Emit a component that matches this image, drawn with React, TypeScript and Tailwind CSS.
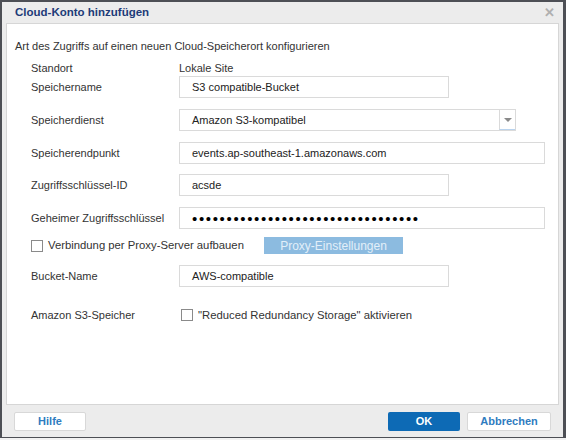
import React from 'react'

const font = { fontFamily: '"Liberation Sans", Arial, sans-serif' }

function Field({ label, children }: { label: string; children: React.ReactNode }) {
    return (
        <div className="flex items-center h-[22px]">
            <div className="w-[148px] text-[11px] text-[#333]">{label}</div>
            {children}
        </div>
    )
}

function TextBox({ value, w }: { value: string; w: string }) {
    return (
        <div className={`${w} h-[22px] border border-[#dadada] bg-white flex items-center px-[12px] text-[11px] text-[#222]`}>
            {value}
        </div>
    )
}

function Checkbox() {
    return <div className="w-[12px] h-[12px] border border-[#8a8a8a] bg-white shrink-0" />
}

export default function App() {
    return (
        <div className="w-[566px] h-[440px] bg-[#f2f2f2] overflow-hidden" style={font}>
            <div className="h-[438px] border-t-2 border-l-2 border-r-[3px] border-b border-[#4d4f55] bg-[#ececec] flex flex-col">
                {/* header */}
                <div className="h-[21px] flex items-center justify-between pl-[13px] pr-[8px]">
                    <span className="text-[11.5px] font-bold text-[#1d3b78]">Cloud-Konto hinzufügen</span>
                    <span className="text-[13px] font-bold text-[#b0b0b0] leading-none">✕</span>
                </div>

                {/* body */}
                <div className="mx-[4px] h-[382px] bg-white border border-[#d6d6d6] flex flex-col pl-[24px]">
                    <div className="mt-[15px] -ml-[16px] h-[14px] leading-[14px] text-[11px] text-[#333]">
                        Art des Zugriffs auf einen neuen Cloud-Speicherort konfigurieren
                    </div>

                    <div className="mt-[8px] h-[14px] flex items-center text-[11px] text-[#333]">
                        <div className="w-[148px]">Standort</div>
                        <div>Lokale Site</div>
                    </div>

                    <div className="mt-[1px]">
                        <Field label="Speichername">
                            <TextBox value="S3 compatible-Bucket" w="w-[270px]" />
                        </Field>
                    </div>

                    <div className="mt-[11px]">
                        <Field label="Speicherdienst">
                            <div className="w-[337px] h-[22px] border border-[#dadada] bg-white flex">
                                <div className="flex-1 flex items-center px-[12px] text-[11px] text-[#222]">Amazon S3-kompatibel</div>
                                <div className="w-[16px] border-l border-[#dadada] border-b border-b-[#b9d3ee] flex items-center justify-center">
                                    <div className="w-0 h-0 border-l-[4px] border-r-[4px] border-t-[4px] border-l-transparent border-r-transparent border-t-[#8a8a8a]" />
                                </div>
                            </div>
                        </Field>
                    </div>

                    <div className="mt-[11px]">
                        <Field label="Speicherendpunkt">
                            <TextBox value="events.ap-southeast-1.amazonaws.com" w="w-[366px]" />
                        </Field>
                    </div>

                    <div className="mt-[10px]">
                        <Field label="Zugriffsschlüssel-ID">
                            <TextBox value="acsde" w="w-[270px]" />
                        </Field>
                    </div>

                    <div className="mt-[11px]">
                        <Field label="Geheimer Zugriffsschlüssel">
                            <div className="w-[366px] h-[22px] border border-[#dadada] bg-white flex items-center px-[12px] text-[15px] text-black tracking-[1.65px] overflow-hidden leading-none">
                                {'•'.repeat(33)}
                            </div>
                        </Field>
                    </div>

                    <div className="mt-[8px] h-[17px] flex items-center">
                        <Checkbox />
                        <span className="ml-[5px] text-[11.3px] text-[#333] w-[216px]">Verbindung per Proxy-Server aufbauen</span>
                        <div className="w-[139px] h-[17px] bg-[#8cbbe0] flex items-center justify-center text-[12px] text-[#e2eff9]">
                            Proxy-Einstellungen
                        </div>
                    </div>

                    <div className="mt-[11px]">
                        <Field label="Bucket-Name">
                            <TextBox value="AWS-compatible" w="w-[270px]" />
                        </Field>
                    </div>

                    <div className="mt-[20px] h-[16px] flex items-center">
                        <div className="w-[150px] text-[11px] text-[#333]">Amazon S3-Speicher</div>
                        <Checkbox />
                        <span className="ml-[5px] text-[11.3px] text-[#333]">"Reduced Redundancy Storage" aktivieren</span>
                    </div>
                </div>

                {/* footer */}
                <div className="flex-1 flex items-center justify-between px-[12px]">
                    <button className="w-[72px] h-[19px] bg-white border border-[#d8d8d8] rounded-[2px] text-[11px] font-bold text-[#2f7cc0]">
                        Hilfe
                    </button>
                    <div className="flex gap-[7px]">
                        <button className="w-[72px] h-[19px] bg-[#0d6ab5] rounded-[2px] text-[11px] font-bold text-white">
                            OK
                        </button>
                        <button className="w-[84px] h-[19px] bg-white border border-[#d8d8d8] rounded-[2px] text-[11px] font-bold text-[#2f7cc0]">
                            Abbrechen
                        </button>
                    </div>
                </div>
            </div>
        </div>
    )
}
